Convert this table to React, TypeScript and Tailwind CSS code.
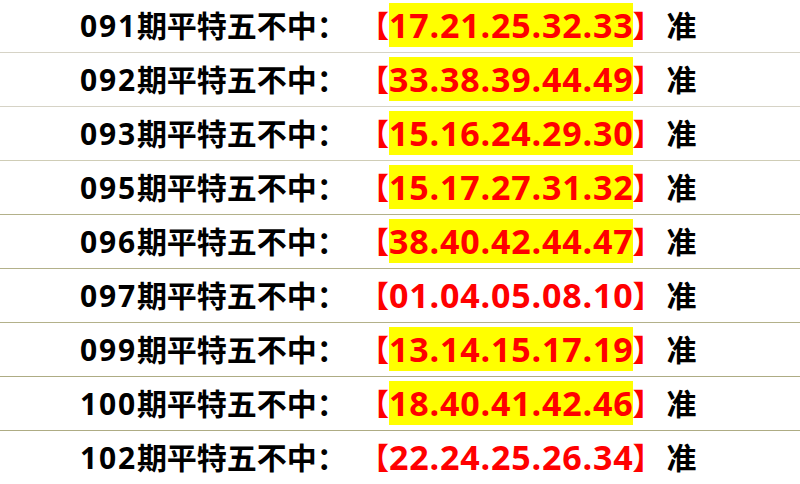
import React from "react";

const rows: { p: string; n: string; hl: boolean; line: string }[] = [
  { p: "091", n: "17.21.25.32.33", hl: true, line: "border-[#d6d3c6]" },
  { p: "092", n: "33.38.39.44.49", hl: true, line: "border-[#d6d3c6]" },
  { p: "093", n: "15.16.24.29.30", hl: true, line: "border-[#cfcdb6]" },
  { p: "095", n: "15.17.27.31.32", hl: true, line: "border-[#b3b18a]" },
  { p: "096", n: "38.40.42.44.47", hl: true, line: "border-[#b3b18a]" },
  { p: "097", n: "01.04.05.08.10", hl: false, line: "border-[#b3b18a]" },
  { p: "099", n: "13.14.15.17.19", hl: true, line: "border-[#aeac84]" },
  { p: "100", n: "18.40.41.42.46", hl: true, line: "border-[#aeac84]" },
  { p: "102", n: "22.24.25.26.34", hl: false, line: "border-transparent" },
];

export default function App() {
  return (
    <div
      className="w-[800px] h-[484px] bg-white overflow-hidden"
      style={{ fontFamily: '"Open Sans", "Noto Sans CJK SC", sans-serif' }}
    >
      <div className="-mt-px">
        {rows.map((r) => (
          <div
            key={r.p}
            className={`h-[54px] border-b ${r.line} flex items-center pl-[80px] font-bold leading-none`}
          >
            <span className="text-black w-[290px] flex items-center">
              <span className="text-[30px] tracking-[1.8px]">{r.p}</span>
              <span className="text-[30px]">期平特五不中：</span>
            </span>
            <span className="text-[#ff0000] flex items-center text-[30px] pt-[1px]">
              <span className="-ml-[12px] w-[31px] text-right">【</span>
              <span
                className={`${r.hl ? "bg-[#ffff00]" : ""} h-[44px] flex items-center text-[34px] tracking-[0.8px] -mt-[2px]`}
              >
                {r.n}
              </span>
              <span className="-ml-[1px]">】</span>
            </span>
            <span className="text-black text-[30px] ml-[4px]">准</span>
          </div>
        ))}
      </div>
    </div>
  );
}
